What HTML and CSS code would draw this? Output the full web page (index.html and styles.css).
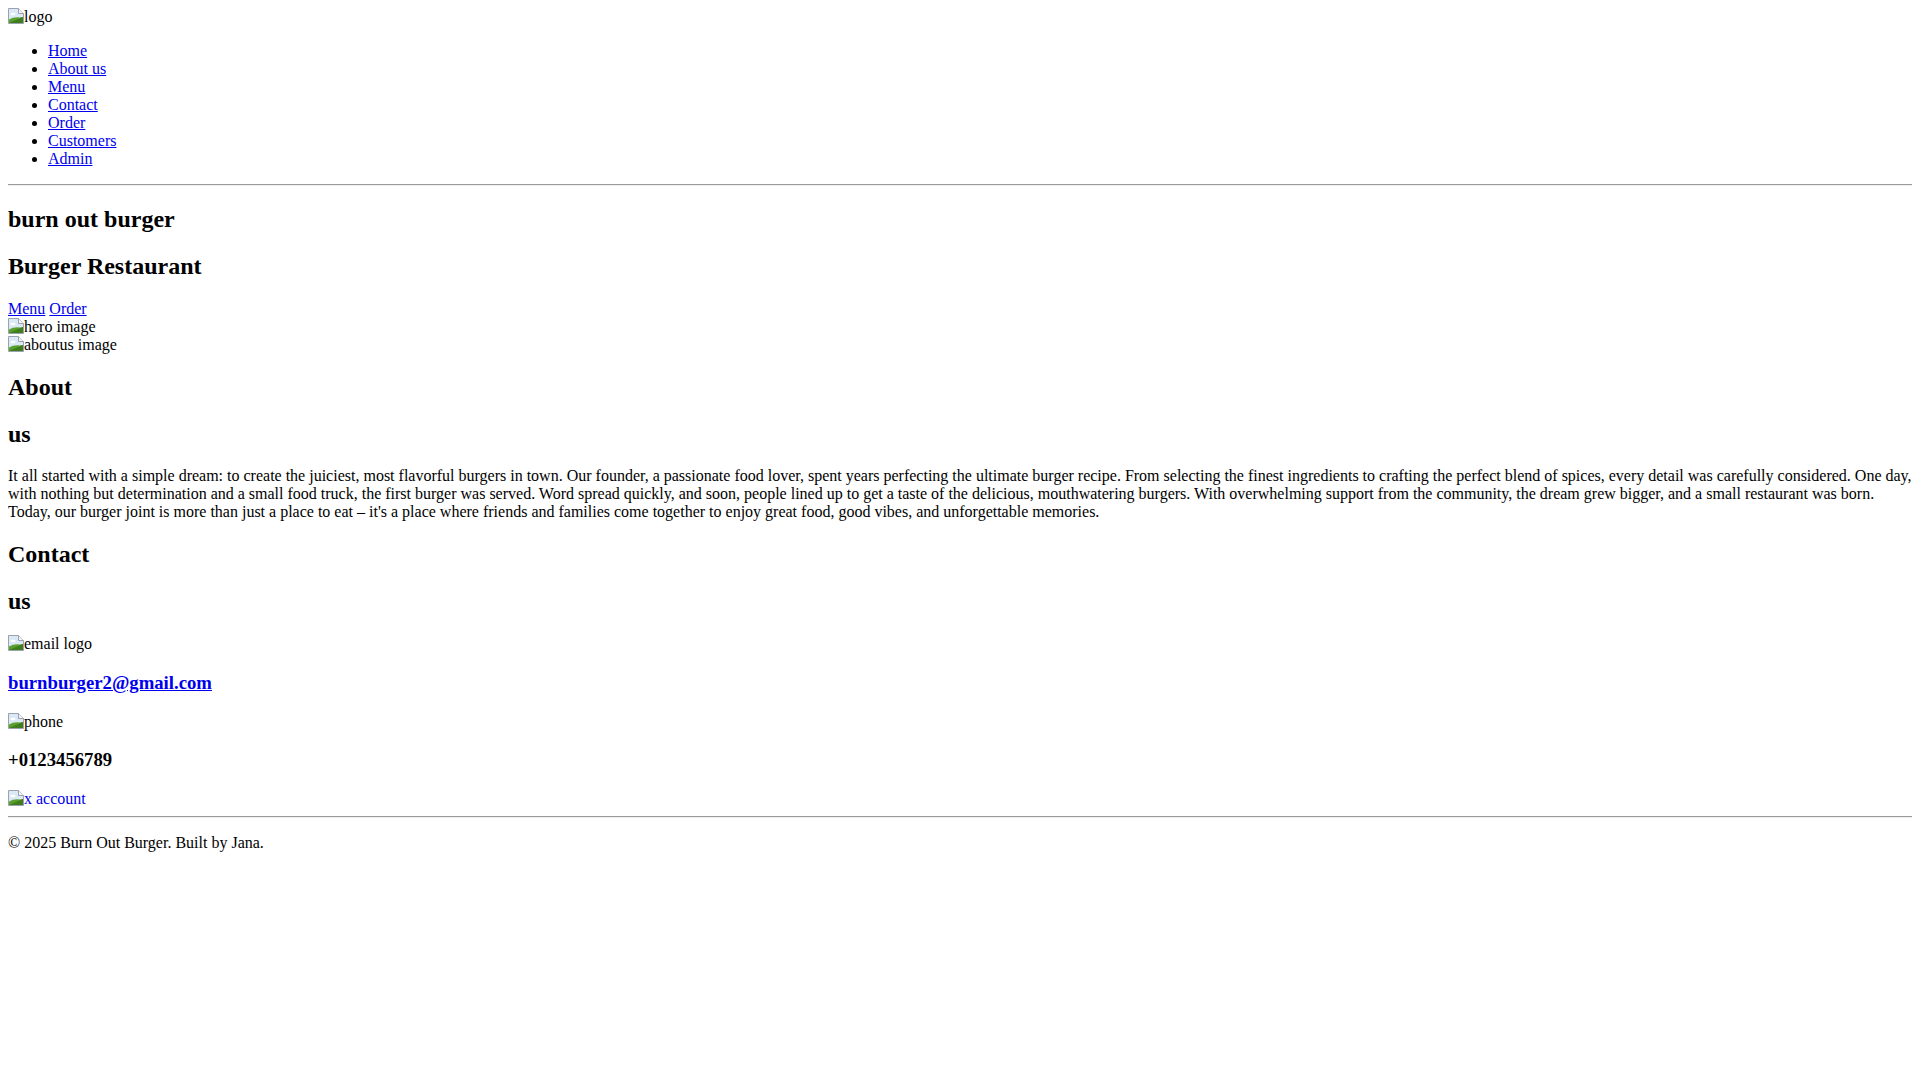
FILE: index.html
```html
<!DOCTYPE html>
<html lang="en">
<head>
<meta charset="utf-8">
<title>Burn Out Burger</title>
<link rel="stylesheet" href="styles.css">
</head>
<body>
<header>
  <span class="broken"><svg class="bicon" width="16" height="16" viewBox="0 0 16 16"><path d="M0.5 0.5H10.5L15.5 5.5V15.5H0.5Z" fill="#dbe9f7" stroke="#9aa3ad"/><path d="M10.5 0.5V5.5H15.5" fill="#f4f4f4" stroke="#9aa3ad"/><ellipse cx="5" cy="6" rx="2.6" ry="1.3" fill="#fff"/><path d="M1 15V11.5Q6 8.5 12 9.5L15 9V15Z" fill="#5aa02c"/><path d="M1 15L15 9V15Z" fill="#3f7d1e"/></svg>logo</span>
  <nav>
    <ul class="nav-list">
      <li><a href="#">Home</a></li>
      <li><a href="#">About us</a></li>
      <li><a href="#">Menu</a></li>
      <li><a href="#">Contact</a></li>
      <li><a href="#">Order</a></li>
      <li><a href="#">Customers</a></li>
      <li><a href="#">Admin</a></li>
    </ul>
  </nav>
  <hr class="rule">
</header>
<main>
  <section class="hero">
    <h2 class="heading">burn out burger</h2>
    <h2 class="heading">Burger Restaurant</h2>
    <div><a href="#">Menu</a> <a href="#">Order</a></div>
    <div><span class="broken"><svg class="bicon" width="16" height="16" viewBox="0 0 16 16"><path d="M0.5 0.5H10.5L15.5 5.5V15.5H0.5Z" fill="#dbe9f7" stroke="#9aa3ad"/><path d="M10.5 0.5V5.5H15.5" fill="#f4f4f4" stroke="#9aa3ad"/><ellipse cx="5" cy="6" rx="2.6" ry="1.3" fill="#fff"/><path d="M1 15V11.5Q6 8.5 12 9.5L15 9V15Z" fill="#5aa02c"/><path d="M1 15L15 9V15Z" fill="#3f7d1e"/></svg>hero image</span></div>
  </section>
  <section class="about">
    <div><span class="broken"><svg class="bicon" width="16" height="16" viewBox="0 0 16 16"><path d="M0.5 0.5H10.5L15.5 5.5V15.5H0.5Z" fill="#dbe9f7" stroke="#9aa3ad"/><path d="M10.5 0.5V5.5H15.5" fill="#f4f4f4" stroke="#9aa3ad"/><ellipse cx="5" cy="6" rx="2.6" ry="1.3" fill="#fff"/><path d="M1 15V11.5Q6 8.5 12 9.5L15 9V15Z" fill="#5aa02c"/><path d="M1 15L15 9V15Z" fill="#3f7d1e"/></svg>aboutus image</span></div>
    <h2 class="heading">About</h2>
    <h2 class="heading">us</h2>
    <p class="text">It all started with a simple dream: to create the juiciest, most flavorful burgers in town. Our founder, a passionate food lover, spent years perfecting the ultimate burger recipe. From selecting the finest ingredients to crafting the perfect blend of spices, every detail was carefully considered. One day, with nothing but determination and a small food truck, the first burger was served. Word spread quickly, and soon, people lined up to get a taste of the delicious, mouthwatering burgers. With overwhelming support from the community, the dream grew bigger, and a small restaurant was born. Today, our burger joint is more than just a place to eat – it's a place where friends and families come together to enjoy great food, good vibes, and unforgettable memories.</p>
  </section>
  <section class="contact">
    <h2 class="heading">Contact</h2>
    <h2 class="heading">us</h2>
    <p class="text"><span class="broken"><svg class="bicon" width="16" height="16" viewBox="0 0 16 16"><path d="M0.5 0.5H10.5L15.5 5.5V15.5H0.5Z" fill="#dbe9f7" stroke="#9aa3ad"/><path d="M10.5 0.5V5.5H15.5" fill="#f4f4f4" stroke="#9aa3ad"/><ellipse cx="5" cy="6" rx="2.6" ry="1.3" fill="#fff"/><path d="M1 15V11.5Q6 8.5 12 9.5L15 9V15Z" fill="#5aa02c"/><path d="M1 15L15 9V15Z" fill="#3f7d1e"/></svg>email logo</span></p>
    <h3 class="sub"><a href="#">burnburger2@gmail.com</a></h3>
    <p class="text"><span class="broken"><svg class="bicon" width="16" height="16" viewBox="0 0 16 16"><path d="M0.5 0.5H10.5L15.5 5.5V15.5H0.5Z" fill="#dbe9f7" stroke="#9aa3ad"/><path d="M10.5 0.5V5.5H15.5" fill="#f4f4f4" stroke="#9aa3ad"/><ellipse cx="5" cy="6" rx="2.6" ry="1.3" fill="#fff"/><path d="M1 15V11.5Q6 8.5 12 9.5L15 9V15Z" fill="#5aa02c"/><path d="M1 15L15 9V15Z" fill="#3f7d1e"/></svg>phone</span></p>
    <h3 class="sub">+0123456789</h3>
    <a href="#"><span class="broken"><svg class="bicon" width="16" height="16" viewBox="0 0 16 16"><path d="M0.5 0.5H10.5L15.5 5.5V15.5H0.5Z" fill="#dbe9f7" stroke="#9aa3ad"/><path d="M10.5 0.5V5.5H15.5" fill="#f4f4f4" stroke="#9aa3ad"/><ellipse cx="5" cy="6" rx="2.6" ry="1.3" fill="#fff"/><path d="M1 15V11.5Q6 8.5 12 9.5L15 9V15Z" fill="#5aa02c"/><path d="M1 15L15 9V15Z" fill="#3f7d1e"/></svg>x account</span></a>
  </section>
</main>
<footer>
  <hr class="rule">
  <p class="text">© 2025 Burn Out Burger. Built by Jana.</p>
</footer>
</body>
</html>
```
FILE: styles.css
```css
html, body {
  background: #ffffff;
}
body {
  margin: 8px;
  font-family: "Liberation Serif", "Times New Roman", serif;
  font-size: 16px;
  color: #000000;
}
a {
  color: #0000ee;
  text-decoration: underline;
}
.broken {
  display: inline-block;
}
.bicon {
  display: inline-block;
  vertical-align: -2px;
}
.nav-list {
  margin: 16px 0;
  padding-left: 40px;
  list-style: disc;
}
.rule {
  margin: 8px 0;
  border: none;
  border-top: 1px solid #9a9a9a;
  border-bottom: 1px solid #eeeeee;
  height: 0;
}
.heading {
  font-size: 24px;
  font-weight: bold;
  margin: 19.92px 0;
}
.sub {
  font-size: 18.72px;
  font-weight: bold;
  margin: 18.72px 0;
}
.text {
  margin: 16px 0;
}
```
